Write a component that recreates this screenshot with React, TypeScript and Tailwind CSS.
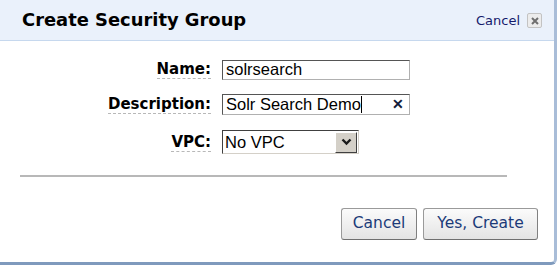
import React from 'react';

const Field: React.FC<{ label: string; h: string; children: React.ReactNode }> = ({ label, h, children }) => (
  <div className={`flex items-center ${h}`}>
    <div className="w-[211px] flex justify-end">
      <span className="font-bold text-[15px] text-black border-b border-dashed border-[#b8b8b8] leading-[18px]">{label}</span>
    </div>
    <div className="pl-[11px]">{children}</div>
  </div>
);

export default function App() {
  return (
    <div className="w-[557px] h-[265px] bg-white font-['DejaVu_Sans',Verdana,sans-serif] overflow-hidden">
      <div className="w-[557px] h-[265px] border-r-[3px] border-b-[3px] border-r-[#a9bdd8] border-b-[#7f9abd] rounded-br-[6px] flex flex-col">
        <div className="h-[41px] bg-[#eaf1fb] border-b border-[#c6d8ee] flex items-center justify-between pl-[22px] pr-[12px]">
          <h1 className="font-bold text-[17.9px] text-black">Create Security Group</h1>
          <div className="flex items-center gap-[7px] pt-[1px]">
            <span className="text-[13px] text-[#151a6b]">Cancel</span>
            <div className="w-[15px] h-[15px] border border-[#c3c3c3] bg-[#ececec] flex items-center justify-center rounded-[2px]">
              <svg width="8" height="8" viewBox="0 0 8 8">
                <path d="M1 1 L7 7 M7 1 L1 7" stroke="#6f6f6f" strokeWidth="2" />
              </svg>
            </div>
          </div>
        </div>

        <div className="pt-[11px] flex flex-col">
          <Field label="Name:" h="h-[35px]">
            <div className="w-[188px] h-[20px] border border-[#b0b0b0] border-t-[#555] border-l-[#555] flex items-center px-[3px] font-['Liberation_Sans',Arial,sans-serif] text-[16.5px] text-black">
              solrsearch
            </div>
          </Field>
          <Field label="Description:" h="h-[35px]">
            <div className="w-[188px] h-[21px] border border-[#b0b0b0] border-t-[#555] border-l-[#555] flex items-center px-[3px] font-['Liberation_Sans',Arial,sans-serif] text-[16.5px] text-black">
              <span>Solr Search Demo</span>
              <span className="w-px h-[17px] bg-black" />
              <span className="ml-auto mr-[2px] text-[14px] font-bold text-[#111a3a]">✕</span>
            </div>
          </Field>
          <Field label="VPC:" h="h-[40px]">
            <div className="w-[137px] h-[24px] border border-[#d4d0c8] border-t-[#404040] border-l-[#404040] flex items-center font-['Liberation_Sans',Arial,sans-serif] text-[16.5px] text-black">
              <span className="pl-[2px] flex-1">No VPC</span>
              <div className="w-[22px] h-[21px] mr-[1px] bg-[#d4d0c8] border border-[#404040] border-t-white border-l-white flex items-center justify-center">
                <svg width="11" height="8" viewBox="0 0 11 8">
                  <path d="M1.5 1.5 L5.5 5.5 L9.5 1.5" stroke="#1a1a1a" strokeWidth="2.4" fill="none" />
                </svg>
              </div>
            </div>
          </Field>
        </div>

        <div className="ml-[20px] mt-[13px] h-[2px] bg-[#b8b8b8] w-[487px]" />

        <div className="flex justify-end gap-[6px] pr-[16px] mt-[31px]">
          <button className="w-[76px] h-[32px] border border-[#9a9a9a] border-b-[#707070] border-r-[#808080] rounded-[3px] bg-gradient-to-b from-[#fbfbfb] to-[#e4e4e4] text-[15.5px] text-[#1b3a78]">Cancel</button>
          <button className="w-[115px] h-[32px] border border-[#9a9a9a] border-b-[#707070] border-r-[#808080] rounded-[3px] bg-gradient-to-b from-[#fbfbfb] to-[#e4e4e4] text-[15.5px] text-[#1b3a78]">Yes, Create</button>
        </div>
      </div>
    </div>
  );
}
